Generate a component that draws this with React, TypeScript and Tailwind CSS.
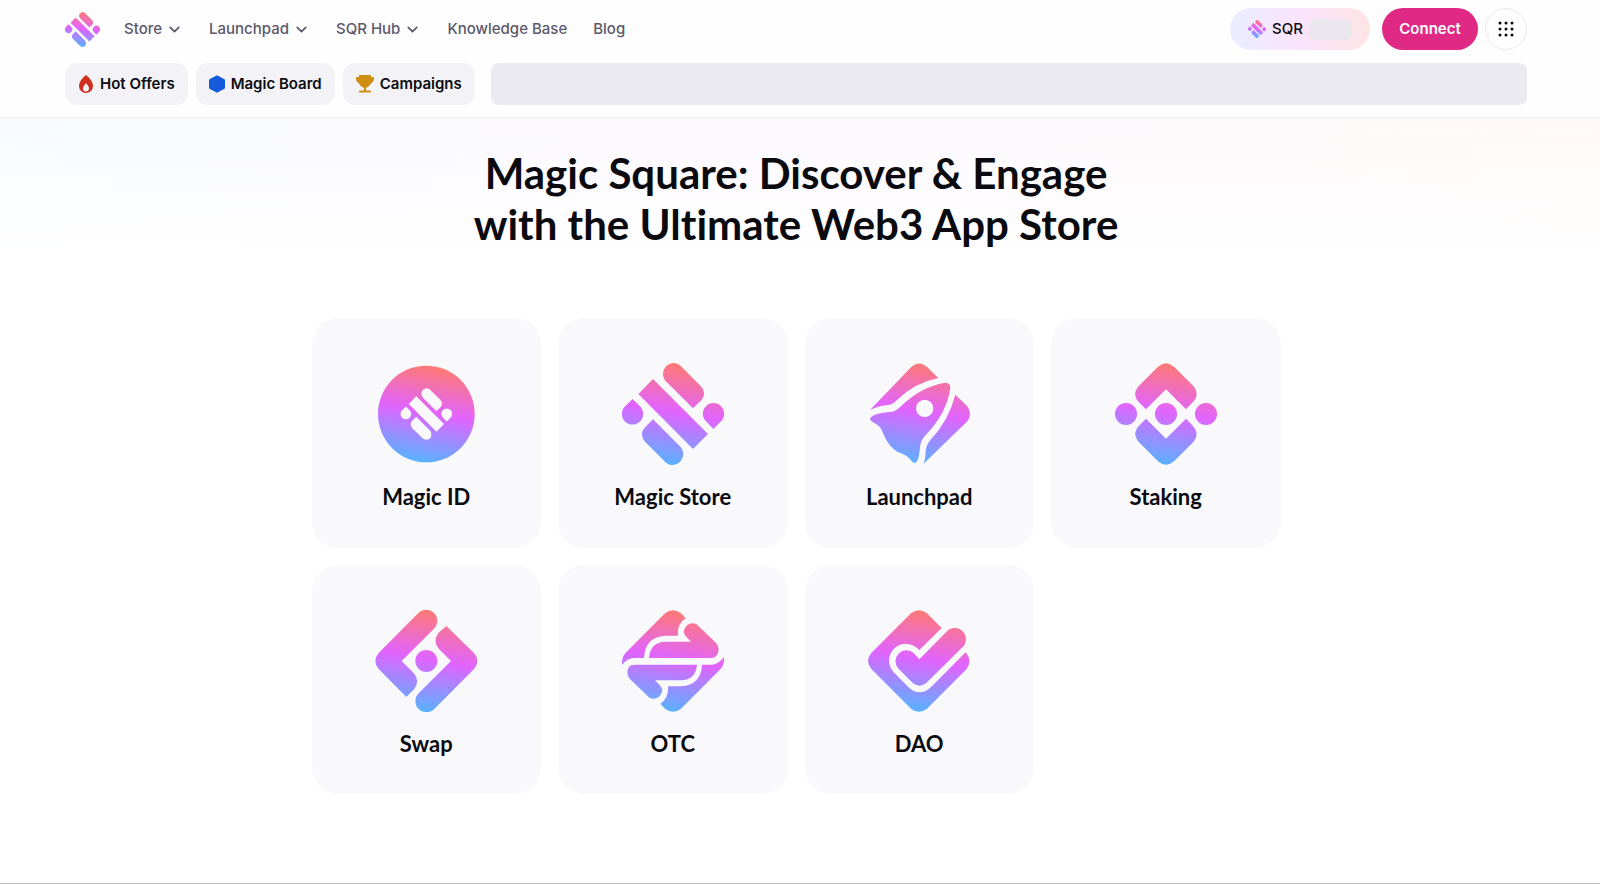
import React from 'react';
import { ChevronDown } from 'lucide-react';

const navItems = [
  { label: 'Store', menu: true },
  { label: 'Launchpad', menu: true },
  { label: 'SQR Hub', menu: true },
  { label: 'Knowledge Base', menu: false },
  { label: 'Blog', menu: false },
];

const MarkShapes = () => (
  <>
    <path d="M264 175 L181 92 A33 33 0 0 1 204 39 Q218 39 228 49 L287 108 Q297 118 297 132 Q297 143 289 151 Z" />
    <path d="M144 87 L309 252 L264 297 L100 132 Z" />
    <path d="M144 208 L227 291 A33 33 0 0 1 204 345 Q190 345 180 335 L121 276 Q111 266 111 252 Q111 241 119 233 Z" />
    <path d="M83 147 L105 169 A32 32 0 1 1 60 169 Z" />
    <path d="M325 237 L303 214 A32 32 0 1 1 348 214 Z" />
  </>
);

const Gradient = ({ id, top, bottom }) => (
  <linearGradient id={id} gradientUnits="userSpaceOnUse" x1="227" y1={top} x2="173" y2={bottom}>
    <stop offset="0" stopColor="#ff7a70" />
    <stop offset="0.48" stopColor="#e164ff" />
    <stop offset="1" stopColor="#55b4ff" />
  </linearGradient>
);

const Logo = ({ id, className }) => (
  <svg viewBox="51 39 306 306" className={className} aria-hidden="true">
    <defs>
      <Gradient id={id} top={39} bottom={345} />
    </defs>
    <g fill={`url(#${id})`}>
      <MarkShapes />
    </g>
  </svg>
);

const apps = [
  {
    name: 'Magic ID',
    viewBox: '46 39 306 306',
    top: 47,
    bottom: 337,
    art: (
      <>
        <circle cx="200" cy="192" r="145" />
        <g fill="#f9f9fc" transform="translate(200 192) scale(0.505) translate(-204 -192)">
          <MarkShapes />
        </g>
      </>
    ),
  },
  { name: 'Magic Store', viewBox: '51 39 306 306', top: 39, bottom: 345, art: <MarkShapes /> },
  {
    name: 'Launchpad',
    viewBox: '39 39 306 306',
    top: 39,
    bottom: 345,
    art: (
      <>
        <path d="M45 180 L168 52 Q192 29 217 52 L250 84 Q180 98 127 149 Q113 164 95 166 Q68 168 45 180 Z" />
        <path d="M301 134 L337 169 Q353 192 337 214 L205 342 Q211 330 212 303 Q213 287 226 270 Q280 214 301 134 Z" />
        <path
          fillRule="evenodd"
          d="M46 203 Q57 190 105 186 Q124 184 139 167 Q202 108 272 98 Q286 99 286 113 Q276 188 213 254 Q197 270 195 291 Q193 330 181 339 Q174 340 167 330 Q159 317 128 306 Q101 291 84 250 Q78 228 57 218 Q42 210 46 203 Z M209 149 A26 26 0 1 0 209 201 A26 26 0 1 0 209 149 Z"
        />
      </>
    ),
  },
  {
    name: 'Staking',
    viewBox: '45 39 306 306',
    top: 39,
    bottom: 345,
    art: (
      <>
        <path d="M138 178 L114 154 Q97 133 114 110 L174 50 Q198 29 222 50 L281 109 Q299 132 281 154 L258 178 L198 118 Z" />
        <path d="M138 206 L114 230 Q97 251 114 274 L174 334 Q198 355 222 334 L281 275 Q299 252 281 230 L258 206 L198 266 Z" />
        <circle cx="78" cy="192" r="33" />
        <circle cx="198" cy="192" r="33" />
        <circle cx="318" cy="192" r="33" />
      </>
    ),
  },
  {
    name: 'Swap',
    viewBox: '46 42 306 306',
    top: 42,
    bottom: 348,
    art: (
      <>
        <path d="M176 51 A33 33 0 0 1 223 98 L126 195 L162 231 Q182 254 164 279 L140 303 L57 219 Q37 195 57 171 Z" />
        <path d="M224 339 A33 33 0 0 1 177 292 L274 195 L238 159 Q218 136 236 111 L260 90 L343 171 Q363 195 343 219 Z" />
        <circle cx="200" cy="195" r="33" />
      </>
    ),
  },
  {
    name: 'OTC',
    viewBox: '51 42 306 306',
    top: 42,
    bottom: 348,
    art: (
      <>
        <path d="M51 207 Q49 184 62 170 L180 52 Q204 33 228 52 L242 67 Q216 84 219 119 L180 119 Q120 123 117 186 L85 186 Q65 188 51 207 Z" />
        <path d="M132 186 Q136 138 180 137 L258 137 L245 124 Q234 112 237 102 Q248 75 274 84 L334 142 Q350 165 331 182 Q325 186 316 186 Z" />
        <path d="M357 183 Q359 206 346 220 L228 338 Q204 357 180 338 L166 323 Q192 306 189 271 L228 271 Q288 267 291 206 L323 206 Q343 202 357 183 Z" />
        <path d="M276 206 Q272 252 228 253 L150 253 L163 266 Q174 278 171 288 Q160 315 134 306 L74 248 Q58 225 77 208 Q83 206 92 206 Z" />
      </>
    ),
  },
  {
    name: 'DAO',
    viewBox: '39 42 306 306',
    top: 42,
    bottom: 348,
    art: (
      <>
        <path d="M49 219 Q29 195 49 171 L168 52 Q192 33 216 52 L260 96 L193 162 Q174 143 151 143 A51 51 0 0 0 116 229 L162 275 Q194 302 226 275 L332 169 Q353 194 335 219 L216 338 Q192 357 168 338 Z" />
        <path d="M193 190 L276 106 A33 33 0 0 1 323 153 L213 262 Q193 276 174 262 L129 217 A33 33 0 0 1 176 171 Z" />
      </>
    ),
  },
];

const FlameIcon = () => (
  <svg viewBox="0 0 16 18" className="w-4 h-[18px]" aria-hidden="true">
    <path
      fill="#d0301f"
      fillRule="evenodd"
      d="M8 0 C10 1.500 15 6 15 11 A7 7 0 0 1 1 11 C1 6 6 1.500 8 0 Z M8 8 C7 9.500 5 11 5 13.500 A3 3 0 0 0 11 13.500 C11 11 9 9.500 8 8 Z"
    />
  </svg>
);

const HexagonIcon = () => (
  <svg viewBox="0 0 16 18" className="w-4 h-[18px]" aria-hidden="true">
    <path
      fill="#155bdc"
      stroke="#155bdc"
      strokeWidth="2"
      strokeLinejoin="round"
      d="M8 1.300 L15 5.200 V12.800 L8 16.700 L1 12.800 V5.200 Z"
    />
  </svg>
);

const TrophyIcon = () => (
  <svg viewBox="0 0 18 18" className="w-[18px] h-[18px]" fill="#cd8e11" aria-hidden="true">
    <path d="M3 0 H15 V2 H17 Q18 2 18 3 Q18 7 15 8.500 Q13.500 12 10 13 V15.500 H14 Q15 15.500 15 16.500 V17.500 H3 V16.500 Q3 15.500 4 15.500 H8 V13 Q4.500 12 3 8.500 Q0 7 0 3 Q0 2 1 2 H3 Z" />
  </svg>
);

const chips = [
  { label: 'Hot Offers', icon: <FlameIcon /> },
  { label: 'Magic Board', icon: <HexagonIcon /> },
  { label: 'Campaigns', icon: <TrophyIcon /> },
];

const App = () => {
  return (
    <div className="min-h-screen flex flex-col bg-white font-['Inter',sans-serif] text-[#0b0b0f] border-b border-[#bfbfbf]">
      {/* Header */}
      <header className="pl-[65px] pr-[73px] pt-2 pb-3 border-b border-[#f1eff5] bg-[#fefefe]">
        <div className="flex items-center h-[42px]">
          <a href="#" aria-label="Magic Square" className="mr-6">
            <Logo id="logo-main" className="w-[35px] h-[35px]" />
          </a>
          <nav className="flex items-center gap-[26px] text-[15px] font-medium text-[#5d586c]">
            {navItems.map((item) =>
              item.menu ? (
                <button key={item.label} className="flex items-center gap-1">
                  {item.label}
                  <ChevronDown className="w-[17px] h-[17px]" strokeWidth={2.5} />
                </button>
              ) : (
                <a key={item.label} href="#">
                  {item.label}
                </a>
              )
            )}
          </nav>
          <div className="ml-auto flex items-center">
            <a
              href="#"
              className="flex items-center h-[42px] w-[140px] pl-[18px] rounded-full bg-linear-to-r from-[#ebedff] via-[#fae4fd] to-[#ffe4e4] text-[15px] font-medium"
            >
              <Logo id="logo-token" className="w-[18px] h-[18px] mr-1.5" />
              SQR
              <span className="ml-1.5 w-[43px] h-[21px] rounded-md bg-[#ebe7ee]" />
            </a>
            <button className="ml-3 h-[42px] w-[96px] rounded-full bg-[#e02885] text-white text-[15px] font-semibold">
              Connect
            </button>
            <button
              aria-label="More apps"
              className="ml-[7px] w-[42px] h-[42px] rounded-full border border-[#ebe9f0] flex items-center justify-center"
            >
              <svg viewBox="0 0 16 16" className="w-4 h-4" fill="#0b0b0f" aria-hidden="true">
                {[2, 8, 14].map((y) => [2, 8, 14].map((x) => <circle key={`${x}-${y}`} cx={x} cy={y} r="1.500" />))}
              </svg>
            </button>
          </div>
        </div>

        <div className="flex items-center mt-[13px]">
          <div className="flex gap-2">
            {chips.map((chip) => (
              <a
                key={chip.label}
                href="#"
                className="flex items-center gap-1.5 h-[42px] px-[13px] rounded-xl bg-[#f3f2f7] text-[15px] font-semibold"
              >
                {chip.icon}
                {chip.label}
              </a>
            ))}
          </div>
          <div className="ml-4 flex-1 h-[42px] rounded-lg bg-[#ebeaf0]" />
        </div>
      </header>

      {/* Hero */}
      <main className="relative flex-1 pr-2 pt-[30px] pb-20">
        <div className="absolute inset-x-0 top-0 h-[140px] bg-linear-to-r from-[#f8fbff] via-[#fdf9ff] to-[#fffaf8]" />
        <div className="absolute inset-x-0 top-0 h-[140px] bg-linear-to-b from-white/0 to-white" />
        <div className="relative">
          <h1 className="text-center font-['Lato',sans-serif] font-bold text-[42px] leading-[51px] [font-variant-ligatures:none]">
            Magic Square: Discover &amp; Engage
            <br />
            with the Ultimate Web3 App Store
          </h1>

          <div className="mt-[68px] mx-auto max-w-[969px] grid grid-cols-4 gap-[17px]">
            {apps.map((app, i) => (
              <a
                key={app.name}
                href="#"
                className="aspect-square flex flex-col items-center pt-[45px] rounded-[26px] bg-[#f9f9fc]"
              >
                <svg viewBox={app.viewBox} className="w-[102px] h-[102px]" aria-hidden="true">
                  <defs>
                    <Gradient id={`app-${i}`} top={app.top} bottom={app.bottom} />
                  </defs>
                  <g fill={`url(#app-${i})`}>{app.art}</g>
                </svg>
                <span className="mt-4 font-['Lato',sans-serif] font-bold text-[22px] leading-8">{app.name}</span>
              </a>
            ))}
          </div>
        </div>
      </main>
    </div>
  );
};

export default App;
